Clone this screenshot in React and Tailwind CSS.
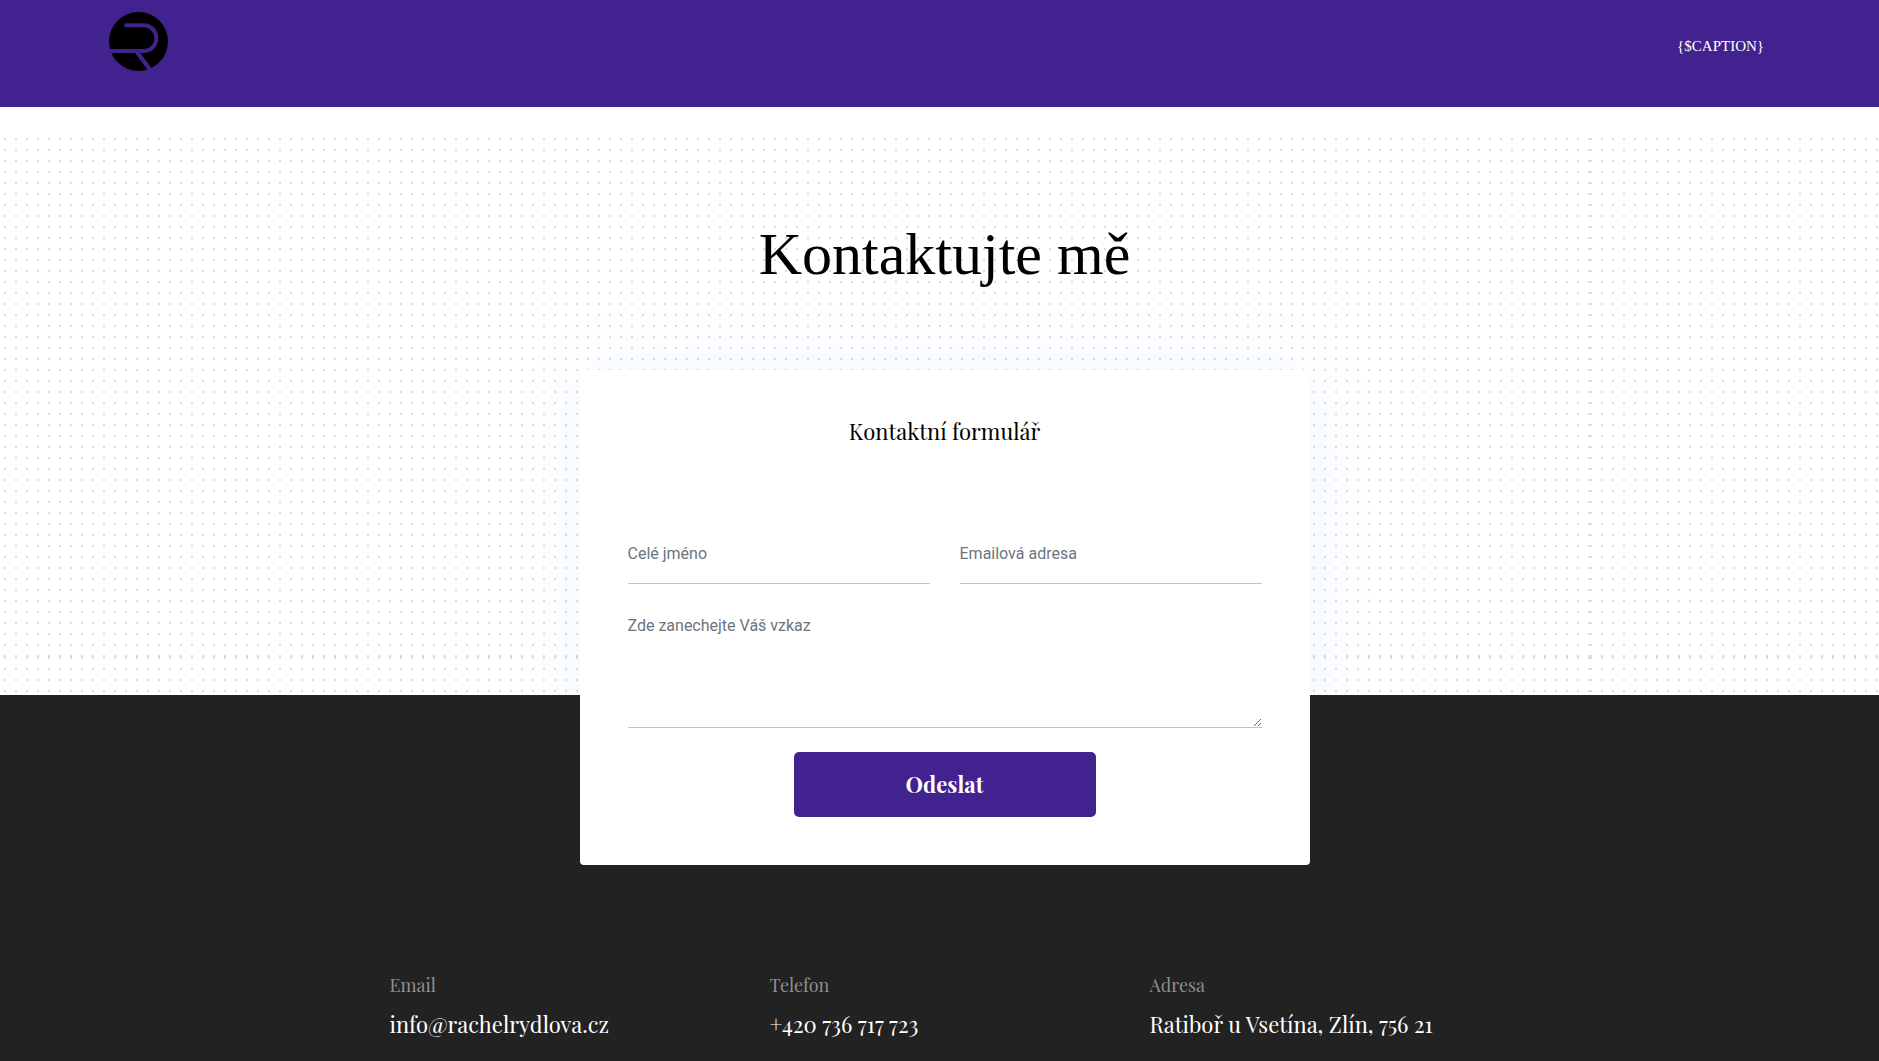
function Logo() {
  return (
    <svg viewBox="0 0 60 60" className="size-[60px]" role="img" aria-label="Rachel Rydlová">
      <circle cx="29.5" cy="29.5" r="29.5" fill="#000" />
      <g fill="none" stroke="#42228f" strokeWidth="4" strokeLinecap="round">
        <path d="M17 13.2H34.5a12.9 12.9 0 0 1 0 25.8H0" />
        <path d="M27.5 39.5L41 57.5" strokeLinecap="butt" />
      </g>
    </svg>
  );
}

function Backdrop() {
  return (
    <div className="absolute inset-0 overflow-hidden" aria-hidden="true">
      <svg className="absolute inset-x-0 top-[31px] h-[calc(100%-31px)] w-full">
        <defs>
          <pattern id="dot" width="11" height="11" patternUnits="userSpaceOnUse">
            <rect width="2" height="2" fill="#dddddd" />
          </pattern>
          <pattern id="dot-tile" x="-7" width="1597" height="519" patternUnits="userSpaceOnUse">
            <rect width="1597" height="519" fill="url(#dot)" />
          </pattern>
        </defs>
        <rect width="100%" height="100%" fill="url(#dot-tile)" />
      </svg>
      {/* Glow of the form card, clipped to the dotted area */}
      <div className="absolute inset-x-0 -bottom-[170px] top-[263px] pl-[10px]">
        <div className="mx-auto h-full max-w-[730px] rounded shadow-[0_0_80px_rgba(0,130,240,0.07)]" />
      </div>
    </div>
  );
}

const field =
  "block w-full border-b border-[#c4c4c4] bg-transparent font-[Roboto,sans-serif] text-base text-gray-700 placeholder:text-[#6c757d] outline-none";

const contacts = [
  { label: "Email", value: "info@rachelrydlova.cz", href: "mailto:info@rachelrydlova.cz" },
  { label: "Telefon", value: "+420 736 717 723", href: "tel:+420736717723" },
  { label: "Adresa", value: "Ratiboř u Vsetína, Zlín, 756 21" },
];

export default function App() {
  return (
    <div className="flex min-h-screen flex-col bg-white font-['Playfair_Display','Liberation_Serif',serif] text-black">
      <header className="flex h-[107px] items-start justify-between bg-[#42228f] pl-[109px] pr-[115px] pt-3">
        <a href="#"><Logo /></a>
        <a href="#" className="mt-6 font-['Liberation_Serif',serif] text-[15px] leading-5 text-white">{"{$CAPTION}"}</a>
      </header>

      <main className="relative pl-[10px]">
        <Backdrop />
        <div className="relative z-10 mx-auto -mb-[170px] flex w-full max-w-[730px] flex-col pt-[111px]">
          <h1 className="text-center font-['Liberation_Serif',serif] text-[60px] leading-[72px]">Kontaktujte mě</h1>
          <form className="mt-20 rounded bg-white p-12" onSubmit={(e) => e.preventDefault()}>
            <h2 className="mb-20 text-center text-[22px] leading-[26px]">Kontaktní formulář</h2>
            <div className="grid grid-cols-2 gap-x-[30px] gap-y-6">
              <input type="text" aria-label="Celé jméno" placeholder="Celé jméno" className={`${field} h-[60px]`} />
              <input type="email" aria-label="Emailová adresa" placeholder="Emailová adresa" className={`${field} h-[60px]`} />
              <textarea
                aria-label="Zde zanechejte Váš vzkaz"
                placeholder="Zde zanechejte Váš vzkaz"
                className={`${field} col-span-2 h-[120px] resize-y pt-[6px]`}
              />
              <button
                type="submit"
                className="col-span-2 h-[65px] w-[302px] justify-self-center rounded-[5px] bg-[#42228f] text-[22px] font-bold text-white"
              >
                Odeslat
              </button>
            </div>
          </form>
        </div>
      </main>

      <footer className="flex-1 bg-[#222222] pb-3 pl-[10px] pt-[276px]">
        <div className="mx-auto grid w-full max-w-[1140px] grid-cols-3">
          {contacts.map((c) => (
            <div key={c.label} className="whitespace-nowrap px-[15px]">
              <p className="mb-2 text-lg leading-7 text-[#8f8f8f]">{c.label}</p>
              {c.href ? (
                <a href={c.href} className="block text-[22px] leading-[34px] text-white">{c.value}</a>
              ) : (
                <p className="text-[22px] leading-[34px] text-white">{c.value}</p>
              )}
            </div>
          ))}
        </div>
      </footer>
    </div>
  );
}
